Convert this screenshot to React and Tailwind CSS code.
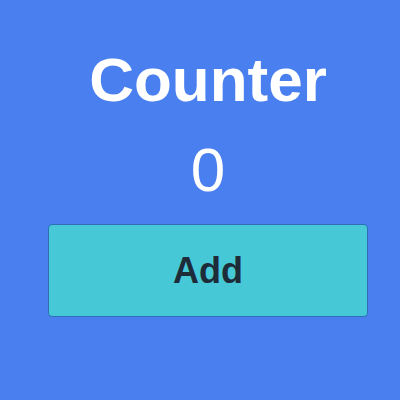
import { useState } from 'react'

export default function App() {
  const [count, setCount] = useState(0)

  return (
    <div className="w-[400px] h-[400px] bg-[#4a7ff0] flex flex-col items-center pt-[44px] pl-[16px] font-['Liberation_Sans',Arial,sans-serif]">
      <h1 className="text-[62px] leading-[71px] font-bold text-white">Counter</h1>
      <p className="mt-[19px] text-[62px] leading-[71px] text-white">{count}</p>
      <button
        onClick={() => setCount(count + 1)}
        className="mt-[19px] w-[320px] h-[93px] bg-[#46c8d6] border border-[#2f6fb8] rounded-[4px] text-[36px] font-bold text-[#1e2b38]"
      >
        Add
      </button>
    </div>
  )
}
